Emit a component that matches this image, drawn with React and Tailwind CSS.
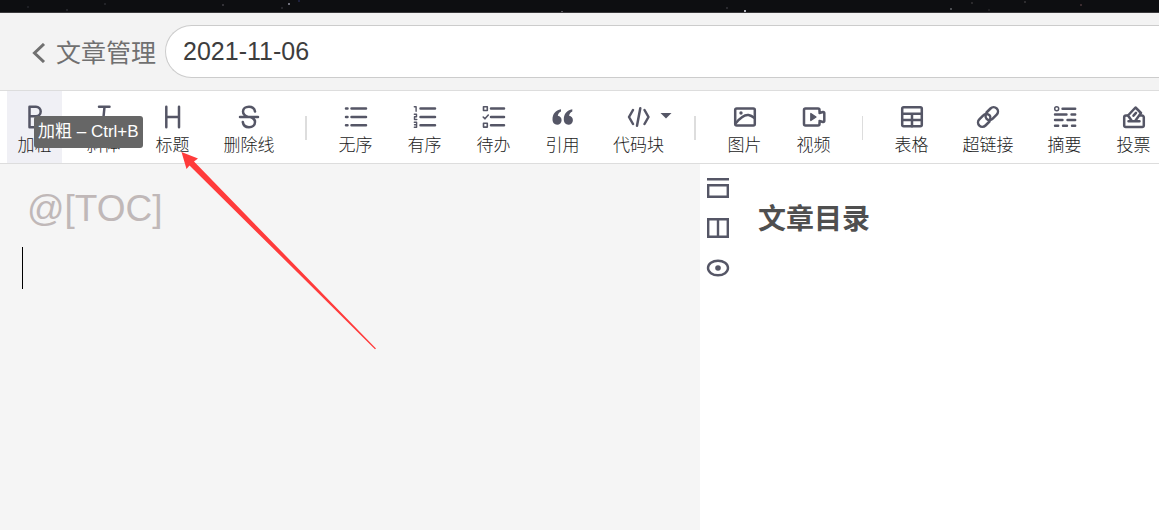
import React from "react";

const paths = {
  bold: (
    <path d="M6.500 1.800v20.400M6.500 1.800h6.500a4.700 4.700 0 0 1 0 9.400H6.500M6.500 11.200h7.500a5.500 5.500 0 0 1 0 11H6.500" />
  ),
  italic: <path d="M7 1.800h10.500M12.500 2l-2 20M6 22.200h9" />,
  heading: <path d="M5.300 1.800v20.400M18 1.800v20.400M5.300 12H18" />,
  strike: (
    <path d="M18 6.500C17.500 3.500 15 1.800 12 1.800c-3.500 0-6 1.900-6 4.700 0 2.700 2 4.300 5 5.500h2.500c2.500 1 4.500 2.400 4.500 5 0 3-2.500 5.200-6 5.200-3.400 0-5.800-2-6.200-5.200M3 12h18" />
  ),
  bullets: (
    <path strokeWidth="2.500" d="M2 3.500h1.500M7.500 3.500h14.500M2 12h1.500M7.500 12h14.500M2 20.300h1.500M7.500 20.300h14.500" />
  ),
  numbers: (
    <>
      <path strokeWidth="2.500" d="M7.500 3.500H22M7.500 12H22M7.500 20.300H22" />
      <path strokeWidth="1.400" d="M1.300 1.800h1.800v4.400M1.300 9.300h2.200v2.400H1.500v2.800h2.300M1.300 17.300h2.300v5H1.300M1.500 19.800h2" />
    </>
  ),
  todo: (
    <>
      <path strokeWidth="2.500" d="M9 3.500h13M9 12h13M9 20.300h13" />
      <path strokeWidth="1.600" d="M1.500 1.700h3.800v3.800H1.500zM1.500 18.300h3.800v3.800H1.500zM1.200 12l1.700 1.800L6.300 10" />
    </>
  ),
  quote: (
    <g fill="currentColor" stroke="none">
      <path d="M10 4.200C4.500 5 1.500 9 1.500 14.500c0 3.100 1.800 5.200 4.600 5.200 2.600 0 4.500-1.800 4.500-4.500 0-2.400-1.500-4.100-3.800-4.400.3-1.900 1.300-3.300 3.200-4.300z" />
      <path d="M21.300 4.200C15.800 5 12.800 9 12.800 14.500c0 3.100 1.800 5.200 4.600 5.200 2.600 0 4.500-1.800 4.500-4.500 0-2.400-1.500-4.100-3.800-4.400.3-1.900 1.300-3.300 3.200-4.300z" />
    </g>
  ),
  code: <path d="M6 5l-4 7 4 7M17.500 5l4 7-4 7M13.300 3.300l-3.300 17.400" />,
  image: (
    <>
      <rect x="2.200" y="3.500" width="19.600" height="17" rx="1.500" />
      <path d="M3 18c4-5 9-8.500 12.500-8 2.500.4 4.500 1.800 6 3" />
      <circle cx="8" cy="8" r="1.700" fill="currentColor" stroke="none" />
    </>
  ),
  video: (
    <>
      <path d="M17.500 6.500V5A1.500 1.500 0 0 0 16 3.500H3.500A1.500 1.500 0 0 0 2 5v14a1.500 1.500 0 0 0 1.500 1.500H16a1.500 1.500 0 0 0 1.500-1.500v-1.500M17.500 8l3.500-1q1.300-.2 1.300 1v8q0 1.200-1.300 1l-3.500-1" />
      <path d="M8.800 8.500v7l5.200-3.500z" fill="currentColor" strokeWidth="1.300" />
    </>
  ),
  table: (
    <>
      <rect x="2.200" y="2.200" width="19.600" height="19" rx="1.500" />
      <path d="M2.200 8.700h19.600M2.200 15h19.600M12 8.700v12.500" />
    </>
  ),
  link: (
    <>
      <path d="M10.500 7.500l4-4a4.300 4.300 0 0 1 6.200 6.100l-4 4.100a4.200 4.200 0 0 1-6.100.1c-1-1-1.400-2-.9-3.200" />
      <path d="M13.500 16.500l-4 4a4.300 4.300 0 0 1-6.200-6.100l4-4.100a4.200 4.200 0 0 1 6.100-.1c1 1 1.400 2 .9 3.200" />
    </>
  ),
  summary: (
    <>
      <circle cx="3.700" cy="3.700" r="2" strokeWidth="1.500" />
      <path strokeWidth="2.400" d="M9.500 3.800h12.700M2 9.500h11.500M18.500 9.500h3.700M2 15h7.500M14.500 15h7.700M2 20.800h3.200M10 20.800h4M19 20.800h3.200" />
    </>
  ),
  vote: (
    <>
      <path d="M5.500 10.500H4A1.800 1.800 0 0 0 2.200 12.300v8.200A1.600 1.600 0 0 0 3.800 22h16.400a1.600 1.600 0 0 0 1.600-1.500v-8.200a1.800 1.800 0 0 0-1.800-1.800h-1.500M6.500 16.300h11" />
      <path d="M9.500 15.500L6 10.500l7.500-8 5.500 5.500-5.500 7.500" />
      <path d="M11.500 10.700l2.500-2.800" />
    </>
  ),
};

function Icon({ name }) {
  return (
    <svg
      aria-hidden="true"
      viewBox="0 0 24 24"
      className="size-6 shrink-0"
      fill="none"
      stroke="currentColor"
      strokeWidth="2.500"
      strokeLinecap="round"
      strokeLinejoin="round"
    >
      {paths[name]}
    </svg>
  );
}

const groups = [
  [["bold", "加粗"], ["italic", "斜体"], ["heading", "标题"], ["strike", "删除线"]],
  [["bullets", "无序"], ["numbers", "有序"], ["todo", "待办"], ["quote", "引用"], ["code", "代码块"]],
  [["image", "图片"], ["video", "视频"]],
  [["table", "表格"], ["link", "超链接"], ["summary", "摘要"], ["vote", "投票"]],
];

const widths = { strike: "w-[70px]", link: "w-[70px]", code: "w-[69px]" };

function Tool({ name, label }) {
  return (
    <button
      type="button"
      aria-describedby={name === "bold" ? "bold-tip" : undefined}
      className={`relative flex h-18 shrink-0 flex-col items-center pt-3.5 text-[#555666] ${
        widths[name] || "w-[55px]"
      } ${name === "bold" ? "bg-[#f0f0f5]" : ""}`}
    >
      <Icon name={name} />
      {name === "code" && (
        <svg aria-hidden="true" viewBox="0 0 12 6" className="absolute top-[22px] right-px h-1.5 w-3">
          <path d="M0.500 0h11L6 5.500z" fill="currentColor" />
        </svg>
      )}
      <span className="mt-[5px] text-[17px] leading-6 font-light whitespace-nowrap text-[#222222]">{label}</span>
      {name === "bold" && (
        <span
          id="bold-tip"
          role="tooltip"
          className="absolute top-[25px] left-[27px] z-10 rounded-[3px] bg-[#666666] px-1 text-[17px] leading-8 whitespace-nowrap text-white"
        >
          加粗 – Ctrl+B
        </span>
      )}
    </button>
  );
}

const stars = [
  [28, 6, "#1e1f24"], [67, 9, "#24252a"], [105, 3, "#222328"], [223, 4, "#323137"],
  [282, 7, "#26262c"], [289, 3, "#70717c"], [299, 0, "#1c1f3a"], [562, 11, "#55555a"],
  [727, 7, "#2a2a2f"], [745, 10, "#b0b2bb"], [951, 8, "#4b4d51"], [972, 2, "#2a292c"],
  [989, 9, "#202023"], [1025, 1, "#2d2c2f"], [1081, 4, "#3a2b2f"],
];

const viewButtons = [
  ["隐藏工具栏", <path key="a" d="M1 3.200h22M2.200 9.200h19.600v11.600H2.200z" />],
  ["双栏预览", <path key="b" d="M2.200 3.200h19.600v17.600H2.200zM12 3.200v17.600" />],
  [
    "预览",
    <g key="c">
      <ellipse cx="12" cy="12" rx="10" ry="7.300" />
      <circle cx="12" cy="12" r="2.800" fill="currentColor" stroke="none" />
    </g>,
  ],
];

export default function App() {
  return (
    <div className="relative flex min-h-screen flex-col overflow-hidden bg-white font-['Liberation_Sans','Noto_Sans_CJK_SC',sans-serif]">
      <div className="h-[13px] overflow-hidden border-b border-[#3b3a3d] bg-[#0d0e11]">
        <svg aria-hidden="true" className="block h-3 w-full">
          {stars.map(([x, y, color]) => (
            <rect key={x} x={x - 1} y={y} width="2" height="2" fill={color} />
          ))}
        </svg>
      </div>

      <header className="flex h-[78px] items-center border-b border-[#dddddd] bg-[#f3f3f3] pl-8">
        <a href="#articles" className="flex shrink-0 items-center pt-0.5 text-[25px] leading-8 text-[#707070]">
          <svg aria-hidden="true" viewBox="0 0 14 20" className="mr-2.5 h-5 w-3.5" fill="none" stroke="currentColor" strokeWidth="3">
            <path d="M12 1L2.500 10l9.500 9" />
          </svg>
          文章管理
        </a>
        <input
          type="text"
          aria-label="文章标题"
          defaultValue="2021-11-06"
          className="ml-[9px] h-[53px] min-w-0 flex-1 rounded-l-full border border-r-0 border-[#cccccc] bg-white pl-[17px] text-[25px] text-[#3d3d3d] outline-none"
        />
      </header>

      <div role="toolbar" aria-label="编辑工具" className="flex h-[73px] gap-3.5 border-b border-[#dddddd] bg-white pl-[7px]">
        {groups.map((tools, i) => (
          <React.Fragment key={i}>
            {i > 0 && (
              <span
                role="separator"
                className={`mx-[7px] mt-[25px] h-6 shrink-0 bg-[#dddddd] ${i === 3 ? "w-px" : "w-0.5"}`}
              />
            )}
            {tools.map(([name, label]) => (
              <Tool key={name} name={name} label={label} />
            ))}
          </React.Fragment>
        ))}
      </div>

      <main className="flex flex-1">
        <div className="relative flex basis-[700px] bg-[#f5f5f5]">
          <textarea
            aria-label="文章内容"
            defaultValue="@[TOC]"
            className="flex-1 resize-none bg-transparent pt-6 pl-[27px] text-[37px] leading-[42px] text-[#c0b8b8] outline-none"
          />
          <span className="absolute top-[83px] left-[22px] h-[42px] w-px bg-black" />
        </div>
        <section className="flex flex-1">
          <div className="flex w-9 flex-col items-center gap-4 pt-3">
            {viewButtons.map(([label, shape]) => (
              <button key={label} type="button" aria-label={label} className="text-[#555666]">
                <svg
                  aria-hidden="true"
                  viewBox="0 0 24 24"
                  className="block size-6"
                  fill="none"
                  stroke="currentColor"
                  strokeWidth="2.400"
                >
                  {shape}
                </svg>
              </button>
            ))}
          </div>
          <h2 className="pt-9 pl-[22px] text-[28px] leading-10 font-bold text-[#4f4f4f]">文章目录</h2>
        </section>
      </main>

      <svg aria-hidden="true" viewBox="0 0 196 198" className="pointer-events-none absolute top-[152px] left-[181px] h-[198px] w-[196px]">
        <path d="M0.500 0L17 6.500l-4 3L195 196.500l-1 .8L8.500 13.500l-3 3.500z" fill="#ff3b3b" />
      </svg>
    </div>
  );
}
